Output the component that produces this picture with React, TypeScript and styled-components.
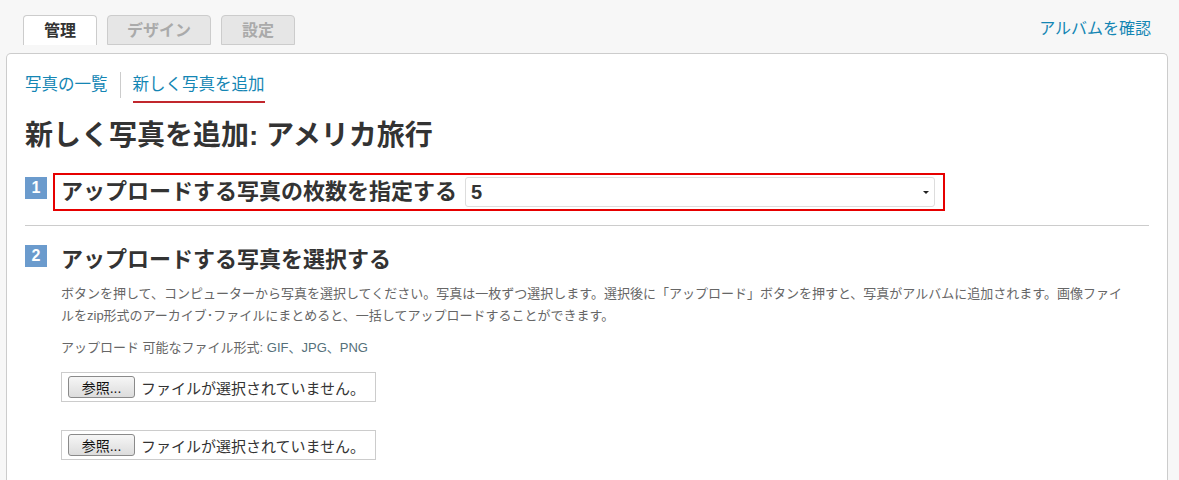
import styled, { createGlobalStyle } from 'styled-components'

const GlobalStyle = createGlobalStyle`
  body {
    margin: 0;
    background: #f7f7f7;
    font-family: "Liberation Sans", "Noto Sans CJK JP", sans-serif;
    color: #333;
  }
`

const tabs = [
    { label: '管理', active: true },
    { label: 'デザイン', active: false },
    { label: '設定', active: false },
]

export default function App() {
    return (
        <>
            <GlobalStyle />
            <TopBar>
                <Tabs>
                    {tabs.map(t => (
                        <Tab key={t.label} $active={t.active}>{t.label}</Tab>
                    ))}
                </Tabs>
                <AlbumLink href="#">アルバムを確認</AlbumLink>
            </TopBar>
            <Panel>
                <SubNav>
                    <SubNavItem href="#">写真の一覧</SubNavItem>
                    <SubNavDivider />
                    <SubNavItem href="#" $active>新しく写真を追加</SubNavItem>
                </SubNav>
                <Heading>新しく写真を追加: アメリカ旅行</Heading>

                <Step>
                    <Badge>1</Badge>
                    <StepTitle $highlighted>
                        アップロードする写真の枚数を指定する
                        <SelectWrap>
                            <CountSelect defaultValue="5">
                                {[1, 2, 3, 4, 5, 6, 7, 8, 9, 10].map(n => (
                                    <option key={n} value={n}>{n}</option>
                                ))}
                            </CountSelect>
                        </SelectWrap>
                    </StepTitle>
                </Step>

                <Divider />

                <Step>
                    <Badge>2</Badge>
                    <StepTitle>アップロードする写真を選択する</StepTitle>
                </Step>
                <StepBody>
                    <Description>
                        ボタンを押して、コンピューターから写真を選択してください。写真は一枚ずつ選択します。選択後に「アップロード」ボタンを押すと、写真がアルバムに追加されます。画像ファイルをzip形式のアーカイブ･ファイルにまとめると、一括してアップロードすることができます。
                    </Description>
                    <Formats>
                        アップロード 可能なファイル形式: <FormatList>GIF、JPG、PNG</FormatList>
                    </Formats>
                    <FileBox>
                        <BrowseButton>参照...</BrowseButton>
                        <FileName>ファイルが選択されていません。</FileName>
                    </FileBox>
                    <FileBox>
                        <BrowseButton>参照...</BrowseButton>
                        <FileName>ファイルが選択されていません。</FileName>
                    </FileBox>
                </StepBody>
            </Panel>
        </>
    )
}

const TopBar = styled.div`
  display: flex;
  justify-content: space-between;
  align-items: center;
  padding: 15px 28px 0 23px;
`

const Tabs = styled.div`
  display: flex;
  gap: 10px;
`

const Tab = styled.div<{ $active?: boolean }>`
  height: 30px;
  min-width: 74px;
  box-sizing: border-box;
  padding: 0 19px;
  text-align: center;
  border: 1px solid #ccc;
  border-bottom: ${({ $active }) => ($active ? 'none' : '1px solid #ccc')};
  border-radius: 4px 4px 0 0;
  background: ${({ $active }) => ($active ? '#fff' : '#e6e6e6')};
  color: ${({ $active }) => ($active ? '#333' : '#aaa')};
  font-size: 16px;
  font-weight: bold;
  line-height: 29px;
`

const AlbumLink = styled.a`
  color: #1486b4;
  font-size: 16px;
  text-decoration: none;
  margin-bottom: 6px;
`

const Panel = styled.div`
  margin: 8px 11px 0 6px;
  background: #fff;
  border: 1px solid #ccc;
  border-bottom: none;
  border-radius: 5px 5px 0 0;
  padding: 18px 18px 40px;
`

const SubNav = styled.nav`
  display: flex;
  align-items: flex-start;
`

const SubNavItem = styled.a<{ $active?: boolean }>`
  font-size: 16.5px;
  line-height: 24px;
  color: #1486b4;
  text-decoration: none;
  padding: 0 0 5px;
  border-bottom: 2px solid ${({ $active }) => ($active ? '#c1272d' : 'transparent')};
`

const SubNavDivider = styled.span`
  width: 1px;
  height: 26px;
  background: #ccc;
  margin: 0 12px;
`

const Heading = styled.h1`
  margin: 15px 0 0;
  font-size: 28px;
  line-height: 36px;
  font-weight: bold;
  color: #333;
`

const Step = styled.div`
  display: flex;
  align-items: flex-start;
  margin-top: 19px;
`

const Badge = styled.span`
  width: 22px;
  height: 22px;
  margin-top: 4px;
  background: #6b9bcd;
  color: #fff;
  font-size: 16px;
  font-weight: bold;
  line-height: 22px;
  text-align: center;
`

const StepTitle = styled.h2<{ $highlighted?: boolean }>`
  display: flex;
  align-items: center;
  gap: 8px;
  margin: 0 0 0 6px;
  padding: 2px 8px 2px 6px;
  border: 2px solid ${({ $highlighted }) => ($highlighted ? '#e60000' : 'transparent')};
  font-size: 22px;
  line-height: 30px;
  font-weight: bold;
  color: #333;
`

const SelectWrap = styled.div`
  position: relative;
  width: 470px;
  height: 30px;

  &::after {
    content: "";
    position: absolute;
    right: 6px;
    top: 14px;
    border-left: 3px solid transparent;
    border-right: 3px solid transparent;
    border-top: 3px solid #222;
    pointer-events: none;
  }
`

const CountSelect = styled.select`
  appearance: none;
  width: 100%;
  height: 30px;
  box-sizing: border-box;
  border: 1px solid #ddd;
  border-radius: 3px;
  background: #fff;
  padding: 0 5px;
  font-family: "Liberation Sans", sans-serif;
  font-size: 20px;
  font-weight: bold;
  color: #333;
`

const Divider = styled.hr`
  border: none;
  border-top: 1px solid #ccc;
  margin: 14px 0 -4px;
`

const StepBody = styled.div`
  padding-left: 36px;
`

const Description = styled.p`
  margin: 4px 0 0;
  max-width: 1072px;
  font-size: 13px;
  line-height: 22px;
  color: #666;
`

const Formats = styled.p`
  margin: 10px 0 0;
  font-size: 13px;
  line-height: 22px;
  color: #666;
`

const FormatList = styled.span`
  color: #55707a;
`

const FileBox = styled.div`
  display: flex;
  align-items: center;
  width: 315px;
  height: 30px;
  box-sizing: border-box;
  border: 1px solid #ccc;
  padding: 0 6px;
  margin-top: 13px;

  & + & {
    margin-top: 28px;
  }
`

const BrowseButton = styled.button`
  width: 67px;
  height: 22px;
  border: 1px solid #8a8a8a;
  border-radius: 3px;
  background: linear-gradient(#f6f6f6, #dcdcdc);
  font-family: "Liberation Sans", "Noto Sans CJK JP", sans-serif;
  font-size: 14px;
  color: #111;
  padding: 0;
`

const FileName = styled.span`
  margin-left: 6px;
  font-size: 15px;
  color: #333;
`
